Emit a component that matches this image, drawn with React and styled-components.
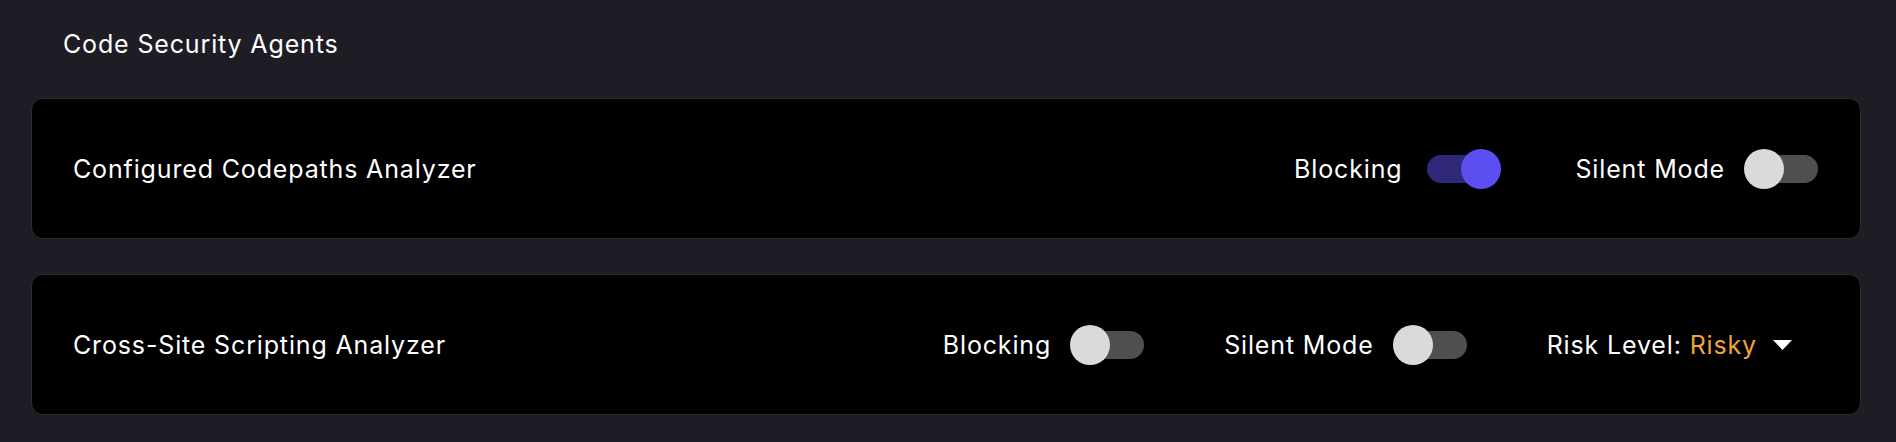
import styled, { createGlobalStyle } from "styled-components"

const GlobalStyle = createGlobalStyle`
    body {
        margin: 0;
        background: #1e1d26;
        font-family: Inter, "Noto Sans", sans-serif;
        font-size: 25px;
        letter-spacing: 0.85px;
        color: #fff;
    }
`

const Page = styled.div`
    display: flex;
    flex-direction: column;
    padding: 30px 35px 26px 31px;
`

const Heading = styled.h2`
    margin: 0 0 39px 32px;
    font-size: 25px;
    font-weight: 400;
    line-height: 29px;
`

const AgentList = styled.div`
    display: flex;
    flex-direction: column;
    gap: 35px;
`

const Card = styled.div`
    box-sizing: border-box;
    height: 141px;
    display: flex;
    align-items: center;
    justify-content: space-between;
    padding: 0 36px 0 41px;
    background: #000;
    border: 1px solid #2d2c35;
    border-radius: 12px;
`

const AgentName = styled.span``

const Controls = styled.div`
    display: flex;
    align-items: center;
    gap: 74px;
`

const Control = styled.label`
    display: flex;
    align-items: center;
    gap: 19px;
    cursor: pointer;
`

const Switch = styled.span`
    position: relative;
    flex-shrink: 0;
    width: 80px;
    height: 40px;
`

const Track = styled.span`
    position: absolute;
    top: 6px;
    left: 6px;
    right: 6px;
    height: 28px;
    border-radius: 14px;
    background: ${({ $on }) => $on ? "#2f2778" : "#4f4f4f"};
`

const Knob = styled.span`
    position: absolute;
    top: 0;
    left: ${({ $on }) => $on ? "40px" : "0"};
    width: 40px;
    height: 40px;
    border-radius: 50%;
    background: ${({ $on }) => $on ? "#5c4ef0" : "#dadada"};
`

const RiskSelect = styled.div`
    display: flex;
    align-items: center;
    gap: 16px;
    margin-right: 32px;
    cursor: pointer;
`

const RiskValue = styled.span`
    color: #eea33f;
`

const Toggle = ({ label, on }) => (
    <Control>
        {label}
        <Switch>
            <Track $on={on} />
            <Knob $on={on} />
        </Switch>
    </Control>
)

const agents = [
    { name: "Configured Codepaths Analyzer", blocking: true, silent: false },
    { name: "Cross-Site Scripting Analyzer", blocking: false, silent: false, risk: "Risky" },
]

const App = () => {
    return (
        <>
            <GlobalStyle />
            <Page>
                <Heading>Code Security Agents</Heading>
                <AgentList>
                    {agents.map((agent) => (
                        <Card key={agent.name}>
                            <AgentName>{agent.name}</AgentName>
                            <Controls>
                                <Toggle label="Blocking" on={agent.blocking} />
                                <Toggle label="Silent Mode" on={agent.silent} />
                                {agent.risk && (
                                    <RiskSelect>
                                        <span>
                                            Risk Level: <RiskValue>{agent.risk}</RiskValue>
                                        </span>
                                        <svg width="19" height="10" viewBox="0 0 19 10">
                                            <polygon points="0,0 19,0 9.5,10" fill="#fff" />
                                        </svg>
                                    </RiskSelect>
                                )}
                            </Controls>
                        </Card>
                    ))}
                </AgentList>
            </Page>
        </>
    )
}

export default App
